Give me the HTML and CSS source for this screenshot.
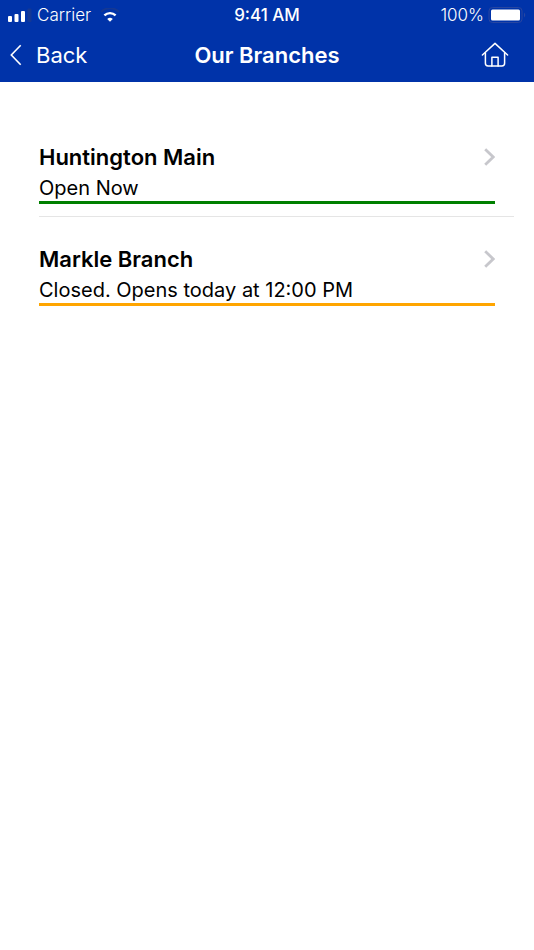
FILE: index.html
```html
<!DOCTYPE html>
<html lang="en">
<head>
    <meta charset="UTF-8">
    <meta name="viewport" content="width=device-width, initial-scale=1.0">
    <title>Our Branches</title>
    <link rel="stylesheet" href="styles.css">
</head>
<body>

<header class="header">
    <div class="status-bar">
        <div class="status-left">
            <svg class="signal" width="24" height="14" viewBox="0 0 24 14">
                <rect x="0" y="8" width="4" height="6" rx="1" fill="#fff"/>
                <rect x="6.5" y="6" width="4" height="8" rx="1" fill="#fff"/>
                <rect x="13" y="3" width="4" height="11" rx="1" fill="#fff"/>
                <rect x="19.5" y="0.5" width="4" height="13.5" rx="1" fill="#143894"/>
            </svg>
            <span>Carrier</span>
            <svg class="wifi" width="20" height="14" viewBox="0 0 20 14">
                <path d="M1 3.9A13 13 0 0 1 19 3.9" fill="none" stroke="#143894" stroke-width="2"/>
                <path d="M4.4 7.4A8.1 8.1 0 0 1 15.6 7.4" fill="none" stroke="#fff" stroke-width="2.4"/>
                <path d="M7.2 10.9A4.2 4.2 0 0 1 12.8 10.9L10 13.8Z" fill="#fff"/>
            </svg>
        </div>
        <span class="status-time">9:41 AM</span>
        <div class="status-right">
            <span>100%</span>
            <svg class="battery" width="38" height="16" viewBox="0 0 38 16">
                <rect x="1" y="0.5" width="33" height="15" rx="3.5" fill="none" stroke="#2846a0"/>
                <rect x="3" y="2.5" width="29" height="11" rx="1.5" fill="#fff"/>
                <path d="M36 5.5Q38.5 8 36 10.5Z" fill="#2846a0"/>
            </svg>
        </div>
    </div>
    <nav class="nav-bar">
        <button class="back-btn" type="button">
            <svg width="12" height="22" viewBox="0 0 12 22">
                <path d="M10.7 1.2L1.3 11L10.7 20.8" fill="none" stroke="#fff" stroke-width="1.6"/>
            </svg>
            Back
        </button>
        <h1 class="nav-title">Our Branches</h1>
        <a class="home-link" href="#" aria-label="Home">
            <svg width="28" height="26" viewBox="0 0 28 26" fill="none" stroke="#fff" stroke-width="1.5" stroke-linejoin="round" stroke-linecap="round">
                <path d="M1.4 13L14 1.4L26.6 13"/>
                <path d="M4.4 11V21.3Q4.4 24 7.1 24H20.9Q23.6 24 23.6 21.3V11"/>
                <path d="M10.9 24V15.3H17.1V24"/>
            </svg>
        </a>
    </nav>
</header>

<main>
    <ul class="branch-list">
        <li>
            <a class="branch" href="#">
                <span class="branch-top">
                    <span class="branch-name">Huntington Main</span>
                    <svg width="12" height="18" viewBox="0 0 12 18">
                        <path d="M2.2 1.2L10.2 9L2.2 16.8" fill="none" stroke="#c7c7cc" stroke-width="2.8"/>
                    </svg>
                </span>
                <span class="branch-status open">Open Now</span>
            </a>
        </li>
        <li>
            <a class="branch" href="#">
                <span class="branch-top">
                    <span class="branch-name">Markle Branch</span>
                    <svg width="12" height="18" viewBox="0 0 12 18">
                        <path d="M2.2 1.2L10.2 9L2.2 16.8" fill="none" stroke="#c7c7cc" stroke-width="2.8"/>
                    </svg>
                </span>
                <span class="branch-status closed">Closed. Opens today at 12:00 PM</span>
            </a>
        </li>
    </ul>
</main>

</body>
</html>
```
FILE: styles.css
```css
body {
    margin: 0;
    background-color: #fff;
    color: #000;
    font-family: Inter, "Liberation Sans", sans-serif;
}
.header {
    background-color: #0033a9;
    color: #fff;
}
/* left / centre / right columns are shared by both bars */
.status-bar,
.nav-bar {
    display: grid;
    grid-template-columns: 1fr auto 1fr;
    align-items: center;
}
.status-bar {
    height: 30px;
    padding: 0 8px;
    font-size: 17px;
    font-weight: 300;
}
.status-left,
.status-right {
    display: flex;
    align-items: center;
}
.signal {
    margin-right: 5px;
}
.wifi {
    margin-left: 9px;
}
.status-time {
    font-weight: 500;
}
.status-right {
    justify-content: flex-end;
    gap: 4px;
}
.nav-bar {
    height: 52px;
    padding: 0 10px 3px;
    box-sizing: border-box;
}
.back-btn {
    display: flex;
    align-items: center;
    gap: 14px;
    justify-self: start;
    padding: 0;
    border: none;
    background: none;
    color: inherit;
    font-family: inherit;
    font-size: 22px;
    cursor: pointer;
}
.nav-title {
    margin: 0;
    font-size: 22px;
    font-weight: 600;
}
.home-link {
    display: flex;
    justify-self: end;
    margin-right: 15px;
}
.branch-list {
    list-style: none;
    margin: 33px 20px 0 39px;
    padding: 0;
}
.branch-list li {
    padding: 28px 19px 12px 0;
    border-bottom: 1px solid #e5e5e5;
}
.branch-list li:last-child {
    border-bottom: none;
}
.branch {
    display: block;
    color: inherit;
    text-decoration: none;
}
.branch-top {
    display: flex;
    align-items: center;
    justify-content: space-between;
    line-height: 28px;
}
.branch-name {
    font-size: 22px;
    font-weight: 600;
}
.branch-status {
    display: block;
    margin-top: 4px;
    border-bottom: 3px solid;
    font-size: 20px;
    line-height: 26px;
}
.open {
    border-color: green;
}
.closed {
    border-color: orange;
}
```
